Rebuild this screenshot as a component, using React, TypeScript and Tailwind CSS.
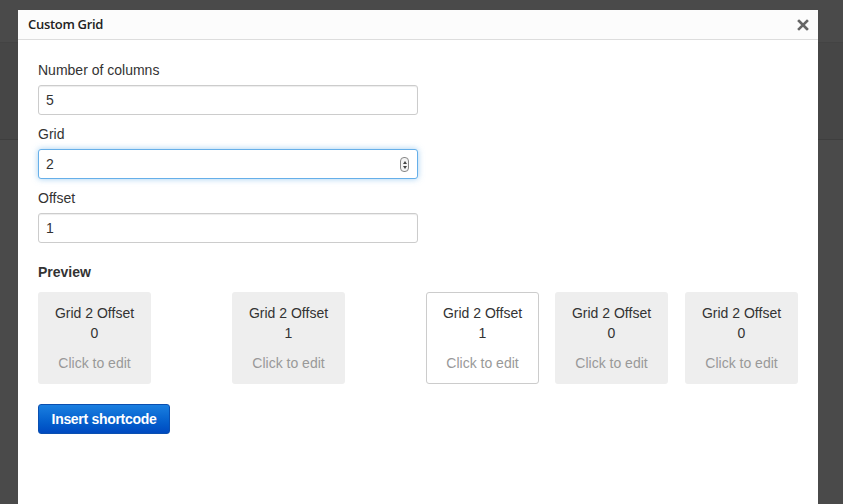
import React from "react";

type Cell = { grid: number; offset: number; active?: boolean; ml: string };

const cells: Cell[] = [
  { grid: 2, offset: 0, ml: "ml-0" },
  { grid: 2, offset: 1, ml: "ml-[81px]" },
  { grid: 2, offset: 1, active: true, ml: "ml-[81px]" },
  { grid: 2, offset: 0, ml: "ml-[16px]" },
  { grid: 2, offset: 0, ml: "ml-[17px]" },
];

function Field({ label, value, focused }: { label: string; value: string; focused?: boolean }) {
  return (
    <div>
      <label className="block text-[14px] leading-[20px] text-[#333] mb-[5px]">{label}</label>
      <div
        className={`relative w-[380px] h-[30px] rounded-[3px] bg-white border flex items-center px-[7px] text-[14px] text-[#333] ${
          focused
            ? "border-[#66afe9] shadow-[0_0_6px_rgba(102,175,233,0.6)]"
            : "border-[#ccc] shadow-[inset_0_1px_1px_rgba(0,0,0,0.075)]"
        }`}
      >
        {value}
        {focused && (
          <span className="absolute right-[8px] top-[7px] w-[9px] h-[15px] rounded-[4px] border border-[#888] bg-[#f4f4f4] flex flex-col items-center justify-center gap-[2px]">
            <span className="w-0 h-0 border-l-[2px] border-r-[2px] border-b-[3px] border-l-transparent border-r-transparent border-b-[#444]" />
            <span className="w-0 h-0 border-l-[2px] border-r-[2px] border-t-[3px] border-l-transparent border-r-transparent border-t-[#444]" />
          </span>
        )}
      </div>
    </div>
  );
}

export default function App() {
  return (
    <div
      className="relative w-[843px] h-[504px] overflow-hidden bg-[#4a4a4a]"
      style={{ fontFamily: "Arial, 'Liberation Sans', Helvetica, sans-serif" }}
    >
      {/* admin page behind the overlay */}
      <div className="h-[43px] border-b border-[#434343]" />
      <div className="h-[97px] bg-[#464646] border-b border-[#3e3e3e]" />

      <div className="absolute left-[18px] top-[10px] w-[800px] h-[494px] bg-white">
        <div className="h-[30px] bg-[#fcfcfc] border-b border-[#dddddd] flex items-center justify-between pl-[10px] pr-[9px]">
          <span
            className="text-[13px] font-semibold text-[#222] tracking-[-0.3px]"
            style={{ fontFamily: "'Open Sans', sans-serif" }}
          >
            Custom Grid
          </span>
          <svg width="12" height="12" viewBox="0 0 12 12" className="mt-[1px]">
            <path d="M2 2 L10 10 M10 2 L2 10" stroke="#666" strokeWidth="2.6" strokeLinecap="square" />
          </svg>
        </div>

        <div className="px-[20px] pt-[20px]">
          <div className="flex flex-col gap-[9px]">
            <Field label="Number of columns" value="5" />
            <Field label="Grid" value="2" focused />
            <Field label="Offset" value="1" />
          </div>

          <div className="mt-[19px] text-[14px] leading-[20px] font-bold text-[#333]">Preview</div>

          <div className="flex mt-[10px]">
            {cells.map((c, i) => (
              <div
                key={i}
                className={`${c.ml} w-[113px] h-[92px] rounded-[3px] text-center text-[14px] leading-[20px] ${
                  c.active ? "bg-white border border-[#cccccc] pt-[10px]" : "bg-[#eeeeee] pt-[11px]"
                }`}
              >
                <div className="text-[#333]">Grid {c.grid} Offset</div>
                <div className="text-[#333]">{c.offset}</div>
                <div className="mt-[10px] text-[#999]">Click to edit</div>
              </div>
            ))}
          </div>

          <button className="mt-[20px] w-[132px] h-[30px] rounded-[3px] border border-[#0a4fb0] bg-gradient-to-b from-[#1a7fe0] to-[#0049c0] text-white text-[14px] font-semibold tracking-[-0.3px]">
            Insert shortcode
          </button>
        </div>
      </div>
    </div>
  );
}
